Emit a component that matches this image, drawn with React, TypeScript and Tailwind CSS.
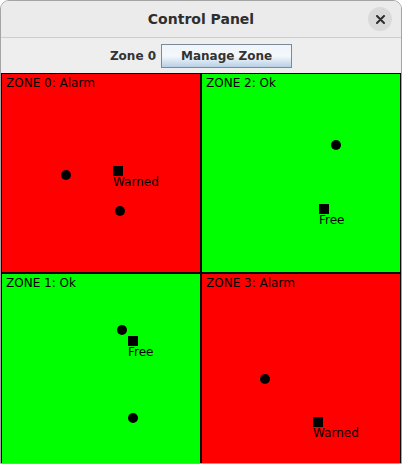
import React from "react";

type Item = { kind: "dot" | "box"; x: number; y: number; label?: string };

interface Zone {
  name: string;
  alarm: boolean;
  items: Item[];
}

const ZONES: Zone[] = [
  {
    name: "ZONE 0",
    alarm: true,
    items: [
      { kind: "dot", x: 60, y: 97 },
      { kind: "box", x: 112, y: 93, label: "Warned" },
      { kind: "dot", x: 114, y: 133 },
    ],
  },
  {
    name: "ZONE 2",
    alarm: false,
    items: [
      { kind: "dot", x: 130, y: 67 },
      { kind: "box", x: 118, y: 131, label: "Free" },
    ],
  },
  {
    name: "ZONE 1",
    alarm: false,
    items: [
      { kind: "dot", x: 116, y: 52 },
      { kind: "box", x: 127, y: 63, label: "Free" },
      { kind: "dot", x: 127, y: 140 },
    ],
  },
  {
    name: "ZONE 3",
    alarm: true,
    items: [
      { kind: "dot", x: 59, y: 101 },
      { kind: "box", x: 112, y: 144, label: "Warned" },
    ],
  },
];

function ZoneCell({ zone }: { zone: Zone }) {
  return (
    <div
      className={`relative h-[200px] border border-black ${zone.alarm ? "bg-[#ff0000]" : "bg-[#00ff00]"}`}
    >
      <div className="pl-[4px] pt-[1px] text-[12px] leading-[16px] text-black">
        {zone.name}: {zone.alarm ? "Alarm" : "Ok"}
      </div>
      {zone.items.map((it, i) =>
        it.kind === "dot" ? (
          <div
            key={i}
            className="absolute w-[10px] h-[10px] rounded-full bg-black"
            style={{ left: it.x - 1, top: it.y - 1 }}
          />
        ) : (
          <div
            key={i}
            className="absolute"
            style={{ left: it.x - 1, top: it.y - 1 }}
          >
            <div className="w-[10px] h-[10px] bg-black" />
            <div className="text-[12px] leading-[12px] text-black">
              {it.label}
            </div>
          </div>
        ),
      )}
    </div>
  );
}

export default function App() {
  return (
    <div
      className="w-[402px] h-[464px] overflow-hidden rounded-t-[9px] border border-[#a4a4a4] bg-[#eeeeee]"
      style={{ fontFamily: '"DejaVu Sans", sans-serif' }}
    >
      <div className="relative flex h-[37px] items-center justify-center border-b border-[#cdcdcd] bg-[#ebebeb]">
        <span className="text-[14px] font-bold text-[#2e2e2e]">
          Control Panel
        </span>
        <div className="absolute right-[9px] top-[6px] flex h-[24px] w-[24px] items-center justify-center rounded-full bg-[#dadada]">
          <svg width="9" height="9" viewBox="0 0 9 9">
            <path
              d="M1 1 L8 8 M8 1 L1 8"
              stroke="#2e2e2e"
              strokeWidth="2"
              strokeLinecap="round"
            />
          </svg>
        </div>
      </div>

      <div className="flex h-[35px] items-center justify-center gap-[5px] pt-[1px]">
        <span className="text-[12px] font-bold text-[#333333]">Zone 0</span>
        <button className="h-[24px] w-[131px] border border-[#7a8a99] bg-gradient-to-b from-[#eef4fa] via-[#f4f8fc] to-[#b8cfe5] text-[12px] font-bold text-[#333333]">
          Manage Zone
        </button>
      </div>

      <div className="grid grid-cols-2">
        {ZONES.map((z) => (
          <ZoneCell key={z.name} zone={z} />
        ))}
      </div>
    </div>
  );
}
